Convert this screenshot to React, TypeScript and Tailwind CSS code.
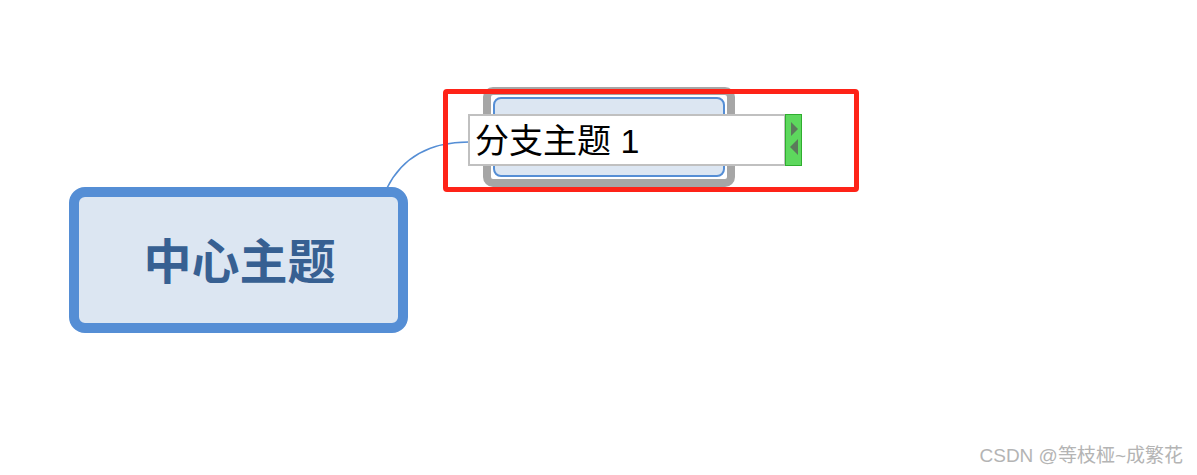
export default function App() {
  return (
    <div className="relative w-[1197px] h-[475px] bg-white overflow-hidden" style={{ fontFamily: '"Liberation Sans", "Noto Sans CJK SC", sans-serif' }}>
      {/* connector */}
      <svg className="absolute left-0 top-0" width="1197" height="475">
        <path d="M387 188 Q410 142 469 142" fill="none" stroke="#558ed5" strokeWidth="1.6" />
      </svg>

      {/* central topic */}
      <div className="absolute left-[69px] top-[187px] w-[339px] h-[146px] rounded-[16px] border-[10px] border-[#558ed5] bg-[#dce6f2] flex items-center justify-center">
        <span className="text-[48px] font-bold text-[#376092] leading-none pt-[5px] pl-[2px]">中心主题</span>
      </div>

      {/* branch topic, selected */}
      <div className="absolute left-[483px] top-[87px] w-[252px] h-[100px] rounded-[10px] border-[8px] border-[#a6a6a6] bg-white p-[2px]">
        <div className="w-full h-full rounded-[8px] border-2 border-[#558ed5] bg-[#dce6f2]" />
      </div>

      {/* annotation frame */}
      <div className="absolute left-[443px] top-[89px] w-[416px] h-[103px] rounded-[4px] border-[5px] border-[#fe2318]" />

      {/* inline editor */}
      <div className="absolute left-[468px] top-[114px] w-[318px] h-[52px] border-2 border-[#c0c0c0] bg-white flex items-center pl-[5px]">
        <span className="text-[34px] text-black leading-none whitespace-nowrap pt-[2px]">分支主题 1</span>
      </div>
      <div className="absolute left-[785px] top-[114px] w-[17px] h-[52px] border border-[#2fae2f] bg-[#5dd85d] flex flex-col items-center pt-[7px] gap-[3px]">
        <svg width="8" height="14" viewBox="0 0 8 14"><polygon points="1,0 8,7 1,14" fill="#5b7a5b" /></svg>
        <svg width="8" height="16" viewBox="0 0 8 16"><polygon points="8,0 0,8 8,16" fill="#5b7a5b" /></svg>
      </div>

      {/* watermark */}
      <div className="absolute right-[14px] top-[446px] text-[19px] leading-none text-[#b4b4b4] whitespace-nowrap">CSDN @等枝桠~成繁花</div>
    </div>
  );
}
